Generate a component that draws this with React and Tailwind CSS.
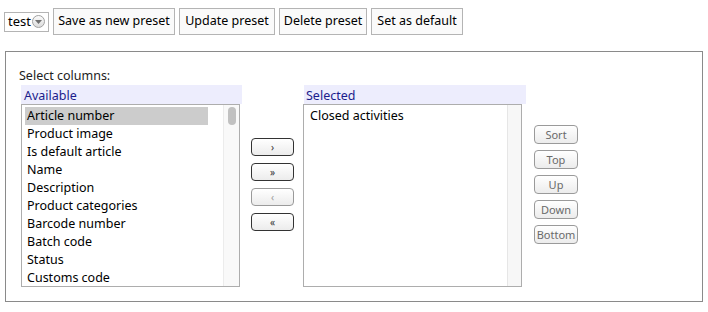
import React from "react";

const available = [
  "Article number",
  "Product image",
  "Is default article",
  "Name",
  "Description",
  "Product categories",
  "Barcode number",
  "Batch code",
  "Status",
  "Customs code",
];

const moveButtons = [
  { label: "›", disabled: false },
  { label: "»", disabled: false },
  { label: "‹", disabled: true },
  { label: "«", disabled: false },
];

const orderButtons = ["Sort", "Top", "Up", "Down", "Bottom"];

function PresetButton({ children, width }) {
  return (
    <button
      className={`h-[27px] border border-[#b4b4b4] bg-[#fafafa] text-[12.5px] text-black ${width}`}
    >
      {children}
    </button>
  );
}

export default function App() {
  return (
    <div className="w-[708px] h-[312px] bg-white text-black font-['Noto_Sans','Open_Sans',sans-serif] text-[12.5px]">
      {/* Preset toolbar */}
      <div className="flex items-center gap-[4px] pl-[4px] pt-[8px]">
        <div className="flex items-center h-[20px] w-[45px] border border-[#b4b4b4] pl-[3px]">
          <span className="text-[13px] leading-none">test</span>
          <span className="ml-[1px] flex items-center justify-center w-[13px] h-[13px] rounded-full border border-[#a0a0a0] bg-gradient-to-b from-[#fbfbfb] to-[#dcdcdc]">
            <svg width="7" height="4" viewBox="0 0 7 4">
              <path d="M0 0 L7 0 L3.5 4 Z" fill="#707070" />
            </svg>
          </span>
        </div>
        <PresetButton width="w-[122px]">Save as new preset</PresetButton>
        <PresetButton width="w-[96px]">Update preset</PresetButton>
        <PresetButton width="w-[88px]">Delete preset</PresetButton>
        <PresetButton width="w-[92px]">Set as default</PresetButton>
      </div>

      {/* Column picker */}
      <div className="mx-[5px] mt-[16px] h-[251px] border border-[#8a8a8a] pt-[14px]">
        <div className="pl-[13px] h-[19px] leading-[19px] text-[#222]">Select columns:</div>
        <div className="flex items-start pl-[15px]">
          {/* Available */}
          <div className="w-[221px]">
            <div className="h-[19px] leading-[19px] pt-[1px] bg-[#ededfd] text-[#1c1c8c] pl-[3px]">Available</div>
            <div className="flex w-[219px] h-[183px] border border-[#adadad]">
              <div className="flex-1 pt-[2px]">
                {available.map((item, i) => (
                  <div
                    key={item}
                    className={`ml-[3px] w-[183px] h-[18px] leading-[17px] pl-[2px] whitespace-nowrap ${
                      i === 0 ? "bg-[#cccccc]" : ""
                    }`}
                  >
                    {item}
                  </div>
                ))}
              </div>
              <div className="w-[16px] bg-[#f9f9f9] border-l border-[#ececec] flex justify-center pt-[2px]">
                <div className="w-[8px] h-[18px] rounded-full bg-[#c1c1c1]" />
              </div>
            </div>
          </div>

          {/* Move buttons */}
          <div className="flex flex-col gap-[7px] ml-[9px] mr-[9px] mt-[53px]">
            {moveButtons.map((b) => (
              <button
                key={b.label}
                className={`w-[43px] h-[18px] rounded-[4px] border bg-gradient-to-b from-white to-[#ececec] text-[10px] leading-none ${
                  b.disabled ? "border-[#9a9a9a] text-[#9a9a9a]" : "border-[#333] text-[#333]"
                }`}
              >
                {b.label}
              </button>
            ))}
          </div>

          {/* Selected */}
          <div className="w-[223px]">
            <div className="ml-[1px] h-[19px] leading-[19px] pt-[1px] bg-[#ededfd] text-[#1c1c8c] pl-[2px]">Selected</div>
            <div className="flex w-[219px] h-[183px] border border-[#adadad]">
              <div className="flex-1 pt-[2px] pl-[6px]">
                <div className="h-[18px] leading-[17px]">Closed activities</div>
              </div>
              <div className="w-[14px] bg-[#f7f7f7] border-l border-[#e6e6e6]" />
            </div>
          </div>

          {/* Order buttons */}
          <div className="flex flex-col gap-[6px] ml-[8px] mt-[40px]">
            {orderButtons.map((b) => (
              <button
                key={b}
                className="w-[44px] h-[19px] rounded-[4px] border border-[#9a9a9a] bg-gradient-to-b from-white to-[#ececec] text-[11px] leading-none text-[#6a6a6a]"
              >
                {b}
              </button>
            ))}
          </div>
        </div>
      </div>
    </div>
  );
}
